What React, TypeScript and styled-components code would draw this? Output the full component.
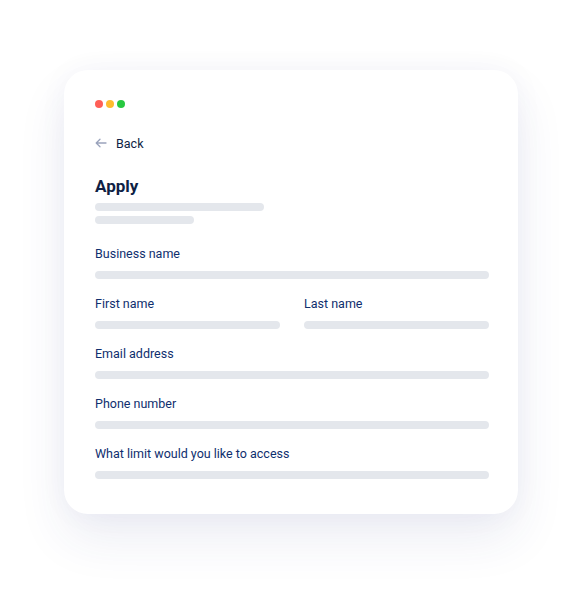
import styled, { createGlobalStyle } from "styled-components";

const GlobalStyle = createGlobalStyle`
  html, body {
    margin: 0;
    padding: 0;
    background: #ffffff;
    font-family: Roboto, "Noto Sans", sans-serif;
  }
`;

const Page = styled.div`
  width: 583px;
  height: 604px;
  display: flex;
  padding: 70px 0 0 64px;
  box-sizing: border-box;
  overflow: hidden;
`;

const Card = styled.div`
  width: 454px;
  height: 444px;
  box-sizing: border-box;
  padding: 30px 29px 0 31px;
  background: #ffffff;
  border-radius: 24px;
  box-shadow: 0 24px 50px rgba(40, 60, 130, 0.09), 0 0 30px rgba(40, 60, 130, 0.04);
  display: flex;
  flex-direction: column;
`;

const Dots = styled.div`
  display: flex;
  gap: 3px;
  height: 8px;
`;

const Dot = styled.span<{ $color: string }>`
  width: 8px;
  height: 8px;
  border-radius: 50%;
  background: ${(p) => p.$color};
`;

const BackLink = styled.div`
  margin-top: 27px;
  display: flex;
  align-items: center;
  gap: 9px;
  height: 16px;
  font-size: 12.5px;
  color: #0e1f45;
`;

const Title = styled.h1`
  margin: 25px 0 0;
  font-size: 17px;
  line-height: 20px;
  font-weight: 700;
  color: #0e1f45;
`;

const Bar = styled.div<{ $width?: string }>`
  height: 8px;
  border-radius: 4px;
  background: #e4e7ec;
  width: ${(p) => p.$width ?? "100%"};
`;

const Intro = styled.div`
  margin-top: 7px;
  display: flex;
  flex-direction: column;
  gap: 5px;
  margin-bottom: 22px;
`;

const Fields = styled.div`
  display: flex;
  flex-direction: column;
  gap: 17px;
`;

const Row = styled.div`
  display: grid;
  grid-template-columns: 1fr 1fr;
  gap: 24px;
`;

const Field = styled.div`
  display: flex;
  flex-direction: column;
  gap: 9px;
`;

const Label = styled.div`
  font-size: 12.5px;
  line-height: 16px;
  color: #0f2f6e;
`;

const ArrowIcon = () => (
  <svg width="12" height="10" viewBox="0 0 12 10" fill="none">
    <path
      d="M11 5H1.5M5 1.2L1.2 5L5 8.8"
      stroke="#9aa3bc"
      strokeWidth="1.3"
      strokeLinecap="round"
      strokeLinejoin="round"
    />
  </svg>
);

function FormField({ label }: { label: string }) {
  return (
    <Field>
      <Label>{label}</Label>
      <Bar />
    </Field>
  );
}

export default function App() {
  return (
    <>
      <GlobalStyle />
      <Page>
        <Card>
          <Dots>
            <Dot $color="#ff5f57" />
            <Dot $color="#febc2e" />
            <Dot $color="#28c840" />
          </Dots>
          <BackLink>
            <ArrowIcon />
            Back
          </BackLink>
          <Title>Apply</Title>
          <Intro>
            <Bar $width="169px" />
            <Bar $width="99px" />
          </Intro>
          <Fields>
            <FormField label="Business name" />
            <Row>
              <FormField label="First name" />
              <FormField label="Last name" />
            </Row>
            <FormField label="Email address" />
            <FormField label="Phone number" />
            <FormField label="What limit would you like to access" />
          </Fields>
        </Card>
      </Page>
    </>
  );
}
